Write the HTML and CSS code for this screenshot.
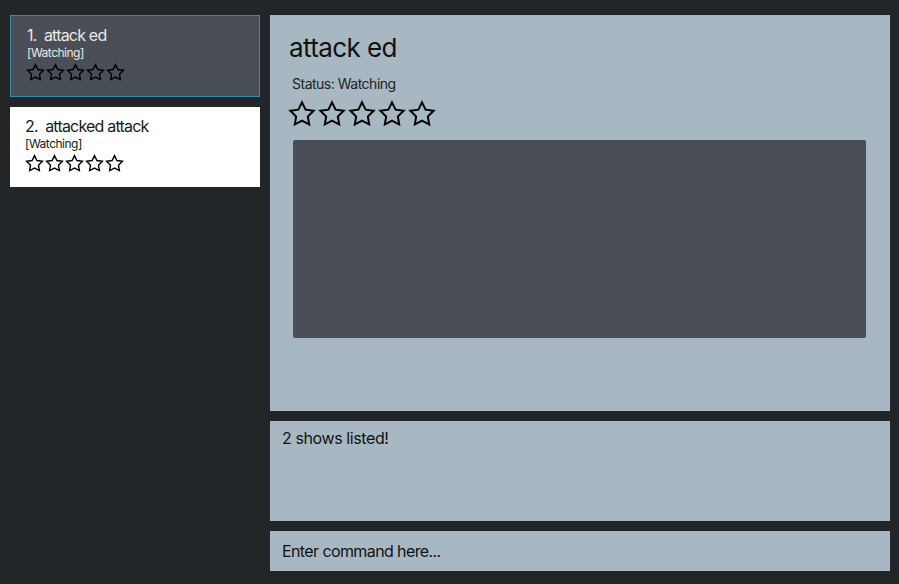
FILE: index.html
```html
<!DOCTYPE html>
<html>
<head>
<meta charset="utf-8">
<link rel="stylesheet" href="styles.css">
</head>
<body>
<div class="left">
  <div class="card selected">
    <div class="card-title">1.&nbsp; attack ed</div>
    <div class="card-status">[Watching]</div>
    <div class="stars small">
      <svg viewBox="0 0 24 24"><polygon points="12,2 15.09,8.26 22,9.27 17,14.14 18.18,21.02 12,17.77 5.82,21.02 7,14.14 2,9.27 8.91,8.26"/></svg>
      <svg viewBox="0 0 24 24"><polygon points="12,2 15.09,8.26 22,9.27 17,14.14 18.18,21.02 12,17.77 5.82,21.02 7,14.14 2,9.27 8.91,8.26"/></svg>
      <svg viewBox="0 0 24 24"><polygon points="12,2 15.09,8.26 22,9.27 17,14.14 18.18,21.02 12,17.77 5.82,21.02 7,14.14 2,9.27 8.91,8.26"/></svg>
      <svg viewBox="0 0 24 24"><polygon points="12,2 15.09,8.26 22,9.27 17,14.14 18.18,21.02 12,17.77 5.82,21.02 7,14.14 2,9.27 8.91,8.26"/></svg>
      <svg viewBox="0 0 24 24"><polygon points="12,2 15.09,8.26 22,9.27 17,14.14 18.18,21.02 12,17.77 5.82,21.02 7,14.14 2,9.27 8.91,8.26"/></svg>
    </div>
  </div>
  <div class="card">
    <div class="card-title">2.&nbsp; attacked attack</div>
    <div class="card-status">[Watching]</div>
    <div class="stars small">
      <svg viewBox="0 0 24 24"><polygon points="12,2 15.09,8.26 22,9.27 17,14.14 18.18,21.02 12,17.77 5.82,21.02 7,14.14 2,9.27 8.91,8.26"/></svg>
      <svg viewBox="0 0 24 24"><polygon points="12,2 15.09,8.26 22,9.27 17,14.14 18.18,21.02 12,17.77 5.82,21.02 7,14.14 2,9.27 8.91,8.26"/></svg>
      <svg viewBox="0 0 24 24"><polygon points="12,2 15.09,8.26 22,9.27 17,14.14 18.18,21.02 12,17.77 5.82,21.02 7,14.14 2,9.27 8.91,8.26"/></svg>
      <svg viewBox="0 0 24 24"><polygon points="12,2 15.09,8.26 22,9.27 17,14.14 18.18,21.02 12,17.77 5.82,21.02 7,14.14 2,9.27 8.91,8.26"/></svg>
      <svg viewBox="0 0 24 24"><polygon points="12,2 15.09,8.26 22,9.27 17,14.14 18.18,21.02 12,17.77 5.82,21.02 7,14.14 2,9.27 8.91,8.26"/></svg>
    </div>
  </div>
</div>
<div class="right">
  <div class="detail">
    <div class="detail-title">attack ed</div>
    <div class="detail-status">Status: Watching</div>
    <div class="stars big">
      <svg viewBox="0 0 24 24"><polygon points="12,2 15.09,8.26 22,9.27 17,14.14 18.18,21.02 12,17.77 5.82,21.02 7,14.14 2,9.27 8.91,8.26"/></svg>
      <svg viewBox="0 0 24 24"><polygon points="12,2 15.09,8.26 22,9.27 17,14.14 18.18,21.02 12,17.77 5.82,21.02 7,14.14 2,9.27 8.91,8.26"/></svg>
      <svg viewBox="0 0 24 24"><polygon points="12,2 15.09,8.26 22,9.27 17,14.14 18.18,21.02 12,17.77 5.82,21.02 7,14.14 2,9.27 8.91,8.26"/></svg>
      <svg viewBox="0 0 24 24"><polygon points="12,2 15.09,8.26 22,9.27 17,14.14 18.18,21.02 12,17.77 5.82,21.02 7,14.14 2,9.27 8.91,8.26"/></svg>
      <svg viewBox="0 0 24 24"><polygon points="12,2 15.09,8.26 22,9.27 17,14.14 18.18,21.02 12,17.77 5.82,21.02 7,14.14 2,9.27 8.91,8.26"/></svg>
    </div>
    <div class="image-box"></div>
  </div>
  <div class="result">2 shows listed!</div>
  <div class="command">Enter command here...</div>
</div>
</body>
</html>
```
FILE: styles.css
```css
html, body {
  margin: 0;
  height: 100%;
}
body {
  background: #232629;
  font-family: Inter, "Noto Sans", sans-serif;
  display: flex;
  gap: 10px;
  padding: 15px 9px 13px 10px;
  box-sizing: border-box;
  letter-spacing: -0.4px;
}
.left {
  width: 250px;
  display: flex;
  flex-direction: column;
  gap: 10px;
}
.card {
  height: 80px;
  box-sizing: border-box;
  background: #ffffff;
  color: #1a1a1a;
  padding: 9px 15px 0 15px;
}
.card.selected {
  height: 82px;
  background: #4a4f57;
  border: 1px solid #3a8aa3;
  color: #e8e8e8;
  padding: 9px 15px 0 15px;
}
.card-title {
  font-size: 16px;
  line-height: 20px;
  letter-spacing: -0.8px;
}
.card-status {
  font-size: 12px;
  line-height: 15px;
  letter-spacing: -0.5px;
}
.card.selected .card-title,
.card.selected .card-status {
  margin-left: 1px;
}
.stars {
  display: flex;
}
.stars svg {
  fill: none;
  stroke: #000;
  stroke-width: 1.7;
  stroke-linejoin: miter;
}
.stars.small {
  gap: 1px;
  margin-top: 3px;
}
.stars.small svg {
  width: 19px;
  height: 19px;
}
.stars.big {
  margin-top: 7px;
  gap: 2px;
  margin-left: -1px;
}
.stars.big svg {
  width: 28px;
  height: 28px;
}
.right {
  flex: 1;
  display: flex;
  flex-direction: column;
  gap: 10px;
}
.detail {
  height: 396px;
  background: #a8b8c2;
  padding: 18px 24px 0 19px;
  box-sizing: border-box;
}
.detail-title {
  font-size: 26px;
  line-height: 30px;
  color: #111;
  letter-spacing: -0.6px;
}
.detail-status {
  margin-top: 12px;
  margin-left: 3px;
  font-size: 14px;
  line-height: 18px;
  color: #222;
  letter-spacing: -0.5px;
}
.image-box {
  margin-top: 12px;
  margin-left: 4px;
  height: 198px;
  background: #4a4e56;
  border-radius: 2px;
}
.result {
  height: 100px;
  background: #a8b8c2;
  padding: 8px 12px;
  box-sizing: border-box;
  font-size: 16px;
  line-height: 18px;
  color: #111;
}
.command {
  height: 40px;
  background: #a8b8c2;
  padding: 0 12px;
  display: flex;
  align-items: center;
  font-size: 16px;
  color: #111;
  letter-spacing: -0.6px;
}
```
